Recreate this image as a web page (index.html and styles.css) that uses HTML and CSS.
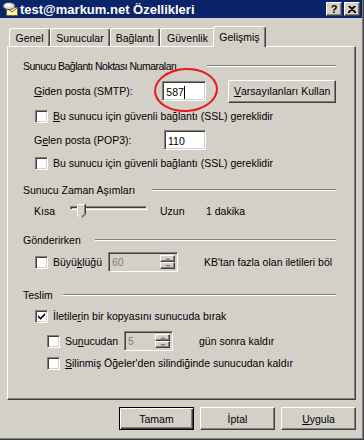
FILE: index.html
```html
<!DOCTYPE html>
<html lang="tr">
<head>
    <meta charset="UTF-8">
    <title>test@markum.net Özellikleri</title>
    <link rel="stylesheet" href="styles.css">
</head>
<body>
    <div class="window">
        <!-- Title bar -->
        <div class="titlebar">
            <svg class="app-icon" viewBox="0 0 16 16">
                <rect x="4.5" y="6.5" width="11" height="8" fill="#fff8b0" stroke="#806020"/>
                <path d="M4.5 6.5 L10 11 L15.5 6.5" fill="none" stroke="#806020"/>
                <ellipse cx="7" cy="5" rx="6" ry="3.5" fill="#d8d8d8" stroke="#505050"/>
                <ellipse cx="6" cy="4" rx="3" ry="1.5" fill="#fff"/>
            </svg>
            <span class="title">test@markum.net Özellikleri</span>
            <span class="cap-btn">?</span>
            <span class="cap-btn">
                <svg width="8" height="7" viewBox="0 0 8 7"><path d="M0.5 0 L7.5 7 M7.5 0 L0.5 7 M1.5 0 L8.5 7 M6.5 0 L-0.5 7" stroke="#000" stroke-width="1.1"/></svg>
            </span>
        </div>

        <div class="main">
            <div class="tabs">
                <div class="tab t-genel">Genel</div>
                <div class="tab t-sunucular">Sunucular</div>
                <div class="tab t-baglanti">Bağlantı</div>
                <div class="tab t-guvenlik">Güvenlik</div>
                <div class="tab active">Gelişmiş</div>
            </div>

            <div class="panel">
                <!-- Port numbers -->
                <div class="hdr"><span class="tight">Sunucu Bağlantı Noktası Numaraları</span><i class="rule rule-ports"></i></div>
                <div class="row gap5">
                    <span class="port-lbl"><u>G</u>iden posta (SMTP):</span>
                    <span class="mark">
                        <span class="field smtp">587<i class="caret"></i></span>
                        <span class="circle"></span>
                    </span>
                    <span class="btn defaults"><u>V</u>arsayılanları Kullan</span>
                </div>
                <div class="row gap5">
                    <span class="check"></span>
                    <span class="cb-text"><u>B</u>u sunucu için güvenli bağlantı (SSL) gereklidir</span>
                </div>
                <div class="row gap4">
                    <span class="port-lbl">G<u>e</u>len posta (POP3):</span>
                    <span class="field pop3">110</span>
                </div>
                <div class="row gap3">
                    <span class="check"></span>
                    <span class="cb-text">Bu sunucu için güvenli bağlantı (SSL) gereklidir</span>
                </div>

                <!-- Timeouts -->
                <div class="hdr gap7"><span>Sunucu Zaman Aşımları</span><i class="rule rule-time"></i></div>
                <div class="row gap1">
                    <span class="short">Kısa</span>
                    <span class="slider">
                        <i class="track"></i>
                        <svg class="thumb" width="9" height="14" viewBox="0 0 9 14">
                            <path d="M0 0 H9 V10 L4.5 14 L0 10 Z" fill="#d4d0c8"/>
                            <path d="M0.5 10.5 V0.5 H7.5" fill="none" stroke="#fff"/>
                            <path d="M8.5 0 V10.2 L4.5 13.8" fill="none" stroke="#404040"/>
                            <path d="M7.5 1 V9.8 L4.5 12.5" fill="none" stroke="#808080"/>
                            <path d="M0.5 10.5 L4 13.5" fill="none" stroke="#fff"/>
                        </svg>
                    </span>
                    <span class="long">Uzun</span>
                    <span>1 dakika</span>
                </div>

                <!-- Sending -->
                <div class="hdr gap9"><span>Gönderirken</span><i class="rule rule-send"></i></div>
                <div class="row gap2">
                    <span class="check"></span>
                    <span class="cb-text size-lbl">Büyü<u>k</u>lüğü</span>
                    <span class="spin size-spin">
                        <span class="spin-val">60</span>
                        <span class="spin-btns"><i class="spin-up"></i><i class="spin-dn"></i></span>
                    </span>
                    <span class="after-spin">KB'tan fazla olan iletileri böl</span>
                </div>

                <!-- Delivery -->
                <div class="hdr gap13"><span>Teslim</span><i class="rule rule-deliv"></i></div>
                <div class="row gap1">
                    <span class="check checked">
                        <svg width="7" height="7" viewBox="0 0 7 7"><path d="M0 2 L2.5 4.5 L7 0 V2.2 L2.5 6.7 L0 4.2 Z" fill="#000"/></svg>
                    </span>
                    <span class="cb-text">İletile<u>r</u>in bir kopyasını sunucuda bırak</span>
                </div>
                <div class="row gap5 sub">
                    <span class="check"></span>
                    <span class="cb-text days-lbl">Su<u>n</u>ucudan</span>
                    <span class="spin days-spin">
                        <span class="spin-val">5</span>
                        <span class="spin-btns"><i class="spin-up"></i><i class="spin-dn"></i></span>
                    </span>
                    <span class="after-spin">gün sonra kaldır</span>
                </div>
                <div class="row gap2 sub">
                    <span class="check"></span>
                    <span class="cb-text"><u>S</u>ilinmiş Öğeler'den silindiğinde sunucudan kaldır</span>
                </div>
            </div>

            <div class="actions">
                <span class="btn default">Tamam</span>
                <span class="btn">İptal</span>
                <span class="btn"><u>U</u>ygula</span>
            </div>
        </div>
    </div>
</body>
</html>
```

FILE: styles.css
```css
* {
    box-sizing: border-box;
}

body {
    margin: 0;
    font-family: "Liberation Sans", Arial, sans-serif;
    font-size: 10.5px;
    color: #000;
    background: #d4d0c8;
}

.window {
    width: 364px;
    height: 440px;
    background: #d4d0c8;
    box-shadow: inset -1px -1px #404040, inset -2px -2px #808080;
    overflow: hidden;
}

/* Title bar */
.titlebar {
    height: 18px;
    margin-right: 2px;
    padding: 0 2px 0 2px;
    background: #0a246a;
    color: #fff;
    display: flex;
    align-items: center;
}

.app-icon {
    width: 16px;
    height: 16px;
}

.title {
    flex: 1;
    margin-left: 2px;
    font-weight: bold;
    font-size: 13px;
    white-space: nowrap;
}

.cap-btn {
    width: 16px;
    height: 14px;
    background: #d4d0c8;
    color: #000;
    font-weight: bold;
    font-size: 11px;
    border: 1px solid;
    border-color: #fff #404040 #404040 #fff;
    box-shadow: inset -1px -1px #808080;
    display: flex;
    align-items: center;
    justify-content: center;
}

.cap-btn + .cap-btn {
    margin-left: 2px;
}

/* Tabs */
.main {
    padding: 8px 8px 0 7px;
}

.tabs {
    display: flex;
    align-items: flex-end;
    height: 21px;
    padding-left: 2px;
    position: relative;
    z-index: 1;
}

.tab {
    height: 18px;
    margin-bottom: 1px;
    padding-top: 3px;
    text-align: center;
    white-space: nowrap;
    border: 1px solid;
    border-bottom: 0;
    border-color: #fff #404040 #fff #fff;
    border-radius: 3px 3px 0 0;
    box-shadow: inset -1px 0 #808080;
    background: #d4d0c8;
}

.t-genel { width: 41px; }
.t-sunucular { width: 60px; }
.t-baglanti { width: 50px; }
.t-guvenlik { width: 55px; }

.tab.active {
    width: 53px;
    height: 21px;
    margin: 0 -2px 0 -2px;
    padding-top: 4px;
    position: relative;
}

.panel {
    margin-top: -1px;
    height: 354px;
    padding: 9px 19px 0 15px;
    border: 1px solid;
    border-color: #fff #404040 #404040 #fff;
    box-shadow: inset -1px -1px #808080;
}

/* Group headers */
.hdr {
    height: 20px;
    display: flex;
    align-items: center;
    justify-content: space-between;
    white-space: nowrap;
}

.tight {
    letter-spacing: -0.5px;
}

.rule {
    height: 2px;
    border-top: 1px solid #808080;
    border-bottom: 1px solid #fff;
}

.rule-ports { width: 129px; }
.rule-time { width: 184px; }
.rule-send { width: 241px; }
.rule-deliv { width: 273px; }

/* Rows */
.row {
    height: 20px;
    padding-left: 11px;
    display: flex;
    align-items: center;
    white-space: nowrap;
}

.row.sub {
    padding-left: 23px;
}

.gap1 { margin-top: 1px; }
.gap2 { margin-top: 2px; }
.gap3 { margin-top: 3px; }
.gap4 { margin-top: 4px; }
.gap5 { margin-top: 5px; }
.gap7 { margin-top: 7px; }
.gap9 { margin-top: 9px; }
.gap13 { margin-top: 13px; }

.port-lbl {
    width: 130px;
}

.check {
    width: 13px;
    height: 13px;
    margin-left: 1px;
    flex: none;
    background: #fff;
    border: 1px solid;
    border-color: #808080 #fff #fff #808080;
    box-shadow: inset 1px 1px #404040, inset -1px -1px #d4d0c8;
    display: flex;
    align-items: center;
    justify-content: center;
}

.cb-text {
    margin-left: 5px;
}

/* Text fields */
.field {
    height: 20px;
    padding: 2px 0 0 3px;
    background: #fff;
    border: 1px solid;
    border-color: #808080 #fff #fff #808080;
    box-shadow: inset 1px 1px #404040, inset -1px -1px #d4d0c8;
    display: flex;
    align-items: center;
}

.smtp { width: 44px; }
.pop3 { width: 42px; }

.caret {
    width: 1px;
    height: 13px;
    background: #000;
}

.mark {
    position: relative;
}

.circle {
    position: absolute;
    top: -13px;
    left: -8px;
    right: -12px;
    bottom: -11px;
    border: 2px solid #e8161e;
    border-radius: 50%;
    transform: rotate(-3deg);
}

/* Buttons */
.btn {
    width: 75px;
    height: 23px;
    background: #d4d0c8;
    border: 1px solid;
    border-color: #fff #404040 #404040 #fff;
    box-shadow: inset -1px -1px #808080;
    display: flex;
    align-items: center;
    justify-content: center;
    white-space: nowrap;
}

.btn.defaults {
    width: 109px;
    margin-left: 22px;
}

.btn.default {
    border-color: #000;
    box-shadow: inset 1px 1px #fff, inset -1px -1px #404040, inset -2px -2px #808080;
}

.actions {
    margin-top: 7px;
    display: flex;
    justify-content: flex-end;
    gap: 6px;
}

/* Slider */
.short {
    width: 36px;
}

.slider {
    width: 77px;
    height: 20px;
    position: relative;
}

.track {
    display: block;
    margin-top: 5px;
    height: 4px;
    border: 1px solid;
    border-color: #808080 #fff #fff #808080;
    box-shadow: inset 1px 1px #404040;
}

.thumb {
    position: absolute;
    top: 3px;
    left: 7px;
}

.long {
    width: 46px;
    margin-left: 13px;
}

/* Spin boxes */
.spin {
    height: 20px;
    padding: 2px;
    background: #d4d0c8;
    color: #808080;
    border: 1px solid;
    border-color: #808080 #fff #fff #808080;
    box-shadow: inset 1px 1px #404040, inset -1px -1px #d4d0c8;
    display: flex;
}

.spin-val {
    flex: 1;
    padding: 1px 0 0 1px;
}

.size-lbl { width: 55px; }
.size-spin { width: 70px; }
.days-lbl { width: 59px; }
.days-spin { width: 49px; }

.after-spin {
    margin-left: 26px;
    color: #000;
}

.spin-btns {
    width: 15px;
    display: flex;
    flex-direction: column;
}

.spin-up,
.spin-dn {
    flex: 1;
    position: relative;
    border: 1px solid;
    border-color: #fff #404040 #404040 #fff;
    box-shadow: inset -1px -1px #808080;
}

.spin-up::after,
.spin-dn::after {
    content: "";
    position: absolute;
    left: 4px;
    top: 2px;
    border-left: 3px solid transparent;
    border-right: 3px solid transparent;
}

.spin-up::after {
    border-bottom: 2px solid #808080;
}

.spin-dn::after {
    border-top: 2px solid #808080;
}
```
